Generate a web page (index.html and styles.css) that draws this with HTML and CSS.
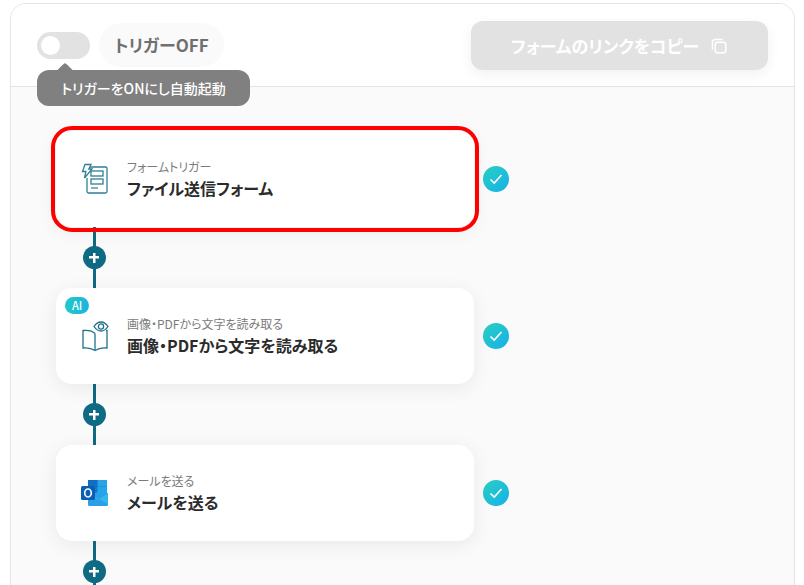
FILE: index.html
```html
<!DOCTYPE html>
<html lang="ja">
<head>
  <meta charset="UTF-8">
  <title>フォームトリガー</title>
  <link rel="stylesheet" href="styles.css">
</head>
<body>
  <div class="panel">
    <div class="header">
      <div class="trigger">
        <span class="toggle"><span class="toggle-knob"></span></span>
        <span class="trigger-label">トリガーOFF</span>
        <div class="tooltip">トリガーをONにし自動起動</div>
      </div>
      <button class="copy-btn">
        <span>フォームのリンクをコピー</span>
        <svg class="copy-icon" width="18" height="18" viewBox="0 0 18 18" fill="none" stroke="currentColor" stroke-width="1.5">
          <rect x="5.2" y="5.2" width="10.6" height="10.6" rx="2.4"/>
          <path d="M12.6 2.6H5A2.6 2.6 0 0 0 2.4 5.2v7.4"/>
        </svg>
      </button>
    </div>

    <div class="flow">
      <div class="step step-selected">
        <div class="card">
          <svg class="card-icon" width="30" height="32" viewBox="0 0 30 32" fill="none" stroke="#2f7f96" stroke-width="1.3">
            <path d="M8 4h17.5A1.5 1.5 0 0 1 27 5.500v23A1.500 1.500 0 0 1 25.500 30H8.500A1.500 1.500 0 0 1 7 28.500V15"/>
            <path d="M5 1.500h6L8.800 6H12L4.500 15l1.400-6.500H2.500z" fill="#fff"/>
            <rect x="11" y="8" width="12" height="5"/>
            <rect x="11" y="16" width="12" height="5"/>
            <path d="M11 25h7" stroke-width="1.800" stroke="#7fb1c0"/>
          </svg>
          <div class="card-text">
            <div class="card-type">フォームトリガー</div>
            <div class="card-title">ファイル送信フォーム</div>
          </div>
        </div>
        <span class="check">
          <svg width="14" height="14" viewBox="0 0 14 14" fill="none" stroke="#fff" stroke-width="1.600"><path d="M1.500 7.500l3.700 3.500L12.500 3"/></svg>
        </span>
      </div>

      <div class="connector"><span class="plus"></span></div>

      <div class="step">
        <div class="card">
          <span class="ai-badge">AI</span>
          <svg class="card-icon" width="30" height="32" viewBox="0 0 30 32" fill="none" stroke="#1f7189" stroke-width="1.300">
            <path d="M15 13.500C12.500 11 8 10 3 10.500V28c5-.5 9 .5 12 2.500 3-2 7-3 12-2.500V10.500h-1"/>
            <path d="M15 13.500V30.500"/>
            <path d="M14 6.500C16 3.500 18.500 2 21 2s5 1.500 7 4.500c-2 3-4.500 4.500-7 4.500s-5-1.500-7-4.500z" fill="#fff"/>
            <circle cx="21" cy="6.500" r="2.600"/>
          </svg>
          <div class="card-text">
            <div class="card-type">画像・PDFから文字を読み取る</div>
            <div class="card-title">画像・PDFから文字を読み取る</div>
          </div>
        </div>
        <span class="check">
          <svg width="14" height="14" viewBox="0 0 14 14" fill="none" stroke="#fff" stroke-width="1.600"><path d="M1.500 7.500l3.700 3.500L12.500 3"/></svg>
        </span>
      </div>

      <div class="connector"><span class="plus"></span></div>

      <div class="step">
        <div class="card">
          <svg class="card-icon" width="28" height="26" viewBox="0 0 28 26">
            <path d="M7 1.500A1.500 1.500 0 0 1 8.500 0h16A1.500 1.500 0 0 1 26 1.500V12H7z" fill="#0a64b8"/>
            <rect x="7" y="0" width="9.500" height="6.500" fill="#0f6fc6"/>
            <rect x="16.500" y="0" width="9.500" height="6.500" fill="#2aa2e6"/>
            <rect x="7" y="6.500" width="9.500" height="6.500" fill="#0f7ad0"/>
            <rect x="16.500" y="6.500" width="9.500" height="6.500" fill="#22a6ea"/>
            <path d="M7 13h20v11.500A1.500 1.500 0 0 1 25.500 26h-17A1.500 1.500 0 0 1 7 24.500z" fill="#2a9fe8"/>
            <path d="M7 13l10 7 10-7v11z" fill="#33b5f0"/>
            <rect x="0" y="6" width="14" height="14" rx="1.500" fill="#0a5fb4"/>
            <ellipse cx="7" cy="13" rx="3.300" ry="4" fill="none" stroke="#fff" stroke-width="1.700"/>
          </svg>
          <div class="card-text">
            <div class="card-type">メールを送る</div>
            <div class="card-title">メールを送る</div>
          </div>
        </div>
        <span class="check">
          <svg width="14" height="14" viewBox="0 0 14 14" fill="none" stroke="#fff" stroke-width="1.600"><path d="M1.500 7.500l3.700 3.500L12.500 3"/></svg>
        </span>
      </div>

      <div class="connector"><span class="plus"></span></div>
    </div>
  </div>
</body>
</html>
```

FILE: styles.css
```css
* {
  margin: 0;
  padding: 0;
  box-sizing: border-box;
}

html, body {
  height: 585px;
  overflow: hidden;
}

body {
  background: #fff;
  color: #2b2b2b;
  font-family: "Noto Sans CJK JP", "Noto Sans", sans-serif;
  font-feature-settings: "palt";
  padding: 3px 9px 0 10px;
}

.panel {
  height: 640px;
  border: 1px solid #e4e4e4;
  border-radius: 16px;
  overflow: hidden;
  background: #fafafa;
}

.header {
  height: 83px;
  padding: 17px 26px 0 26px;
  background: #fff;
  border-bottom: 1px solid #e4e4e4;
  display: flex;
  justify-content: space-between;
  align-items: flex-start;
}

.trigger {
  position: relative;
  display: flex;
  align-items: center;
  gap: 9px;
  margin-top: 2px;
}

.toggle {
  width: 53px;
  height: 27px;
  border-radius: 14px;
  background: #e2e2e2;
  padding: 4px;
}

.toggle-knob {
  display: block;
  width: 19px;
  height: 19px;
  border-radius: 50%;
  background: #fff;
}

.trigger-label {
  height: 44px;
  width: 125px;
  border-radius: 22px;
  background: #fafafa;
  color: #707070;
  font-size: 17px;
  font-weight: 700;
  line-height: 44px;
  text-align: center;
}

.tooltip {
  position: absolute;
  left: 0;
  top: 47px;
  width: 213px;
  height: 36px;
  border-radius: 12px;
  background: #808080;
  color: #fff;
  font-size: 14px;
  font-weight: 500;
  line-height: 36px;
  text-align: center;
  white-space: nowrap;
}

.tooltip::before {
  content: "";
  position: absolute;
  left: 22px;
  top: -5px;
  width: 12px;
  height: 12px;
  background: #808080;
  transform: rotate(45deg);
  border-radius: 2px;
}

.copy-btn {
  width: 297px;
  height: 49px;
  border: none;
  border-radius: 12px;
  background: #e2e2e2;
  color: #fff;
  font: inherit;
  font-size: 17px;
  font-weight: 700;
  box-shadow: 0 4px 14px rgba(0, 0, 0, 0.06);
  display: flex;
  align-items: center;
  justify-content: center;
  gap: 11px;
}

.flow {
  padding: 44px 0 0 45px;
  display: flex;
  flex-direction: column;
}

.step {
  display: flex;
  align-items: center;
  gap: 9px;
}

.card {
  position: relative;
  width: 418px;
  height: 96px;
  background: #fff;
  border-radius: 16px;
  box-shadow: 0 4px 20px rgba(0, 0, 0, 0.07);
  display: flex;
  align-items: center;
  padding-left: 24px;
}

.step-selected .card {
  outline: 4px solid #f00;
  outline-offset: 1px;
}

.card-icon {
  flex: none;
  width: 30px;
  margin-right: 17px;
}

.card-type {
  color: #7b7b7b;
  font-size: 12px;
  line-height: 18px;
}

.card-title {
  font-size: 16px;
  font-weight: 700;
  line-height: 24px;
}

.ai-badge {
  position: absolute;
  left: 9px;
  top: 9px;
  width: 24px;
  height: 17px;
  border-radius: 9px;
  background: linear-gradient(90deg, #22c8c8, #1cb4e0);
  color: #fff;
  font-size: 11px;
  font-weight: 500;
  line-height: 17px;
  text-align: center;
}

.check {
  width: 26px;
  height: 26px;
  border-radius: 50%;
  background: linear-gradient(135deg, #2bd0c0, #14b0ea);
  display: flex;
  align-items: center;
  justify-content: center;
}

.connector {
  width: 76px;
  height: 61px;
  display: flex;
  align-items: center;
  justify-content: center;
  background: linear-gradient(#0f6a84, #0f6a84) center / 3px 100% no-repeat;
}

.plus {
  width: 23px;
  height: 23px;
  border-radius: 50%;
  background:
    linear-gradient(#fff, #fff) center / 10px 2.500px no-repeat,
    linear-gradient(#fff, #fff) center / 2.500px 10px no-repeat,
    #0f6a84;
}
```
